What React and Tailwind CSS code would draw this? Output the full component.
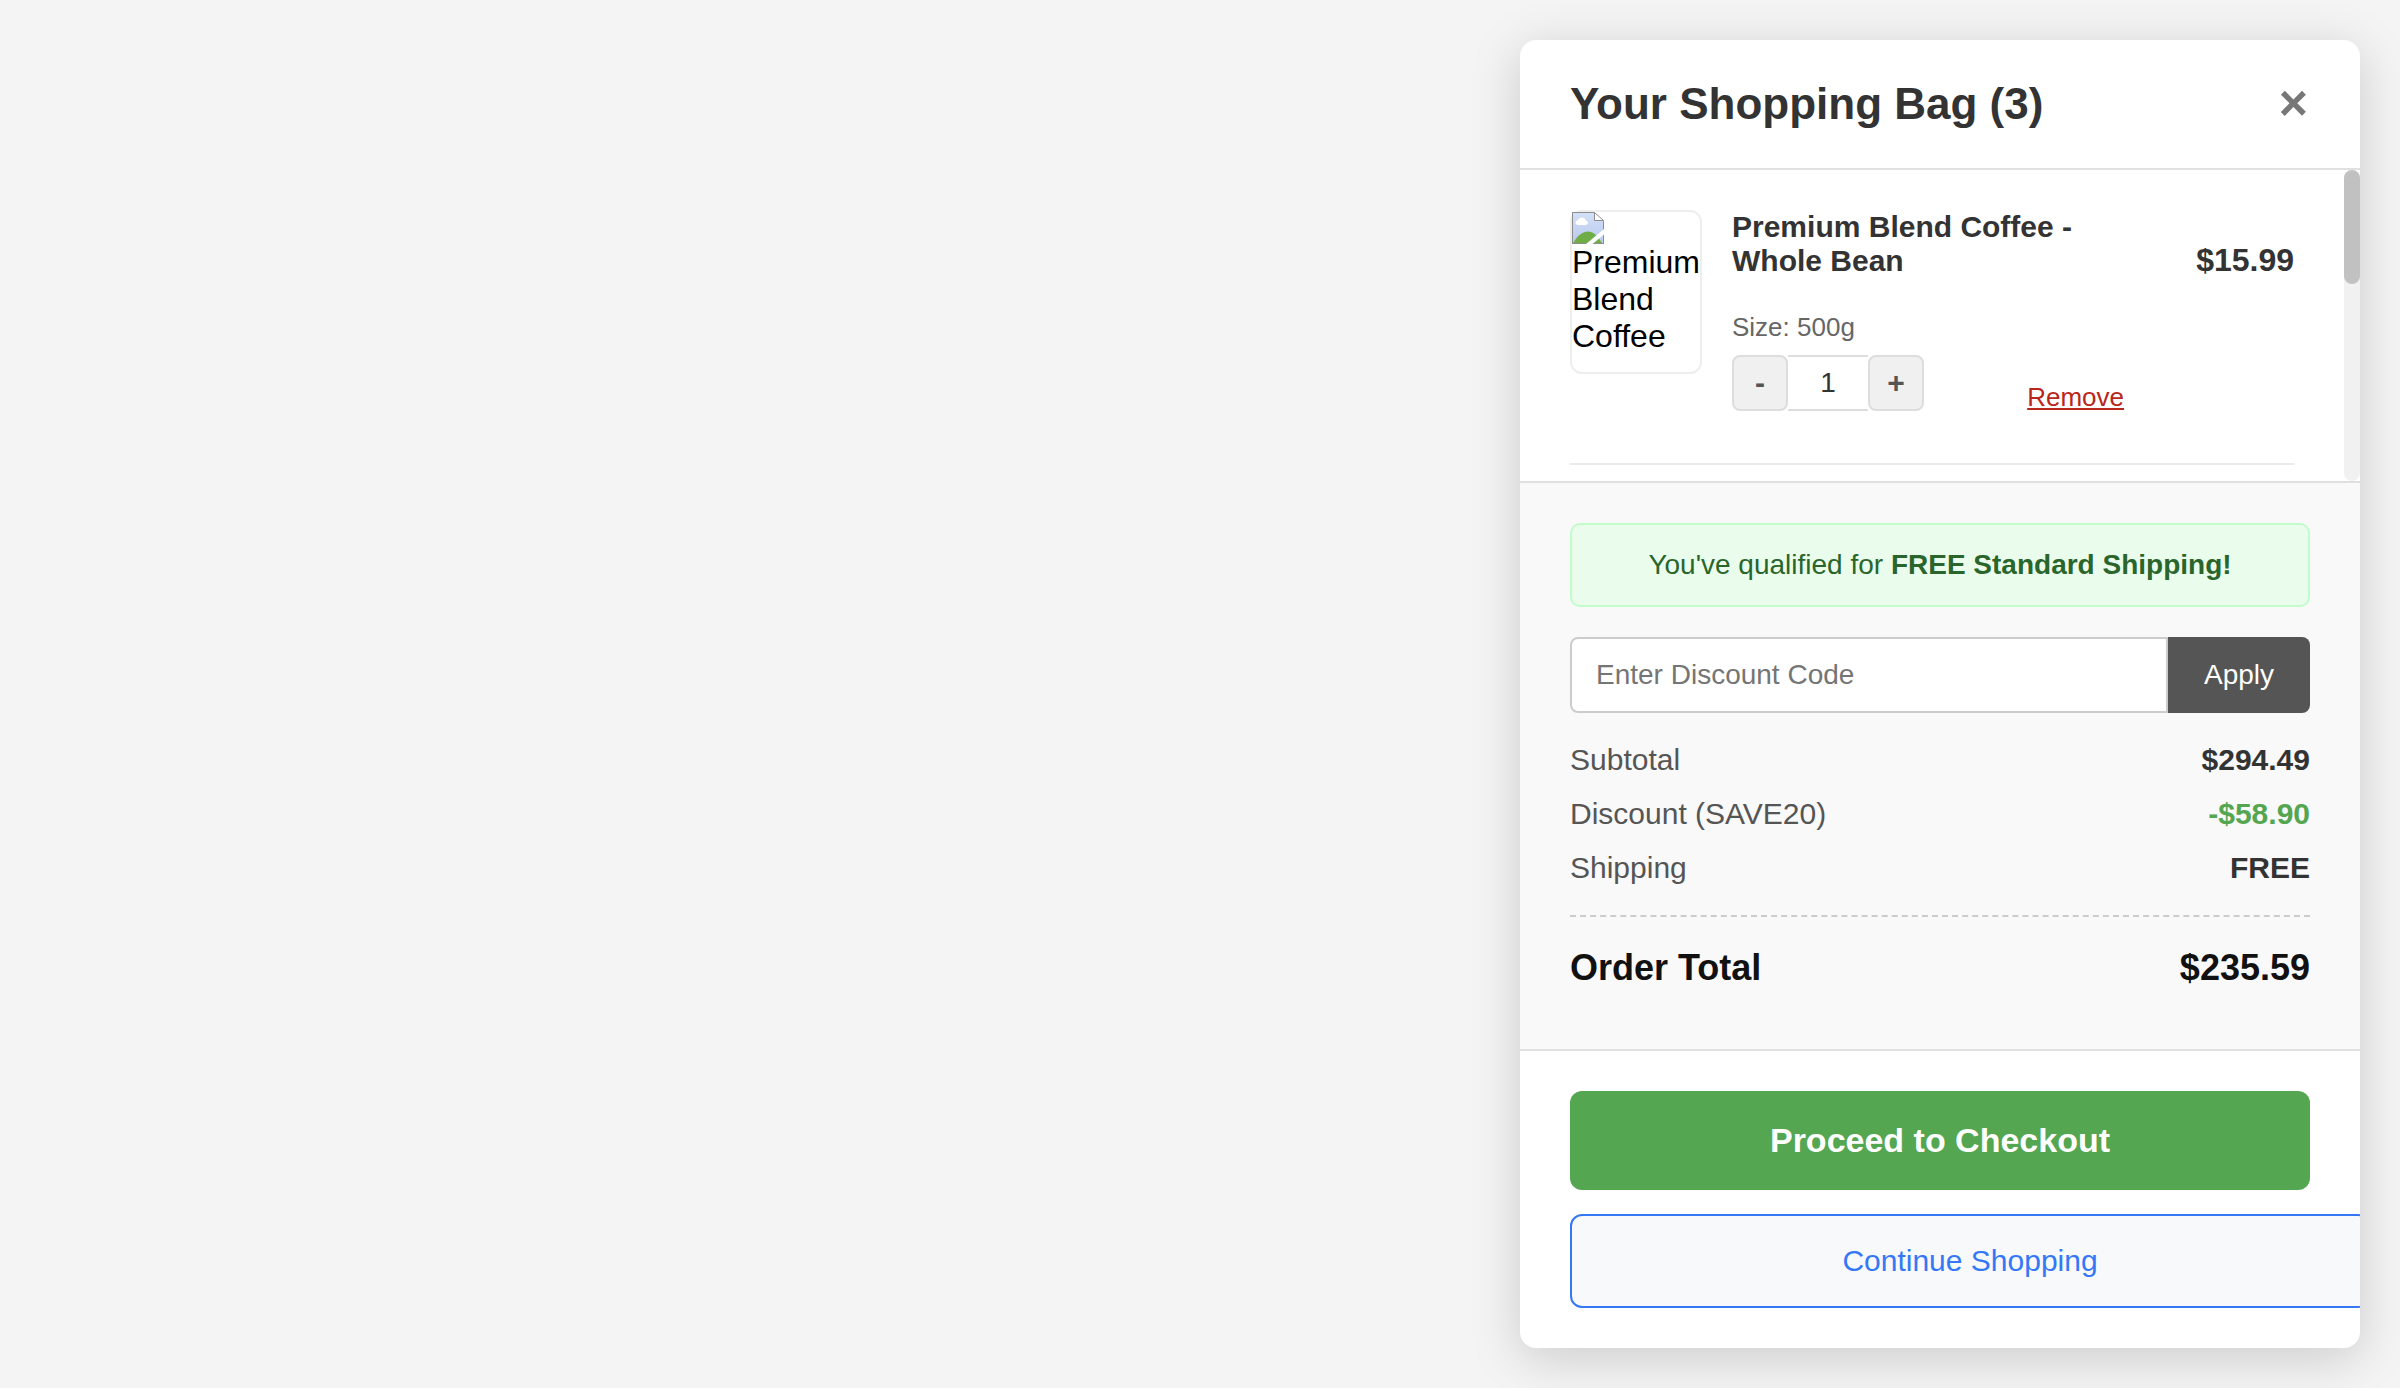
const summary = [
  { label: "Subtotal", value: "$294.49", tone: "text-[#333]" },
  { label: "Discount (SAVE20)", value: "-$58.90", tone: "text-[#54a651]" },
  { label: "Shipping", value: "FREE", tone: "text-[#333]" },
];

function MissingImage({ alt }) {
  return (
    <div className="h-[164px] w-[132px] shrink-0 rounded-xl border-2 border-[#eee] text-[32px] leading-[37px] text-black">
      <svg className="block size-8" viewBox="0 0 32 32">
        <defs>
          <linearGradient id="sky" x1="0" y1="0" x2="0" y2="1">
            <stop offset="0" stopColor="#d3e0f8" />
            <stop offset="1" stopColor="#b9c9ee" />
          </linearGradient>
        </defs>
        <path d="M0.5 0.5H22.5L31.5 9V31.5H0.5Z" fill="url(#sky)" />
        <path d="M1 31C6 23 11 19.5 16 19.5S25 23 30 31Z" fill="#70ad47" />
        <path d="M6.500 13C4.500 13 3.500 11.800 3.500 10.500S4.700 8.300 6 8.300C6.500 6.500 8 5.500 10 5.500S13.300 6.800 13.700 8.500C15.200 8.600 16 9.600 16 10.800S15 13 13.500 13Z" fill="#fff" />
        <path d="M0.5 32V0.5H22.5" fill="none" stroke="#8d8d8d" />
        <path d="M0 31.500H32M31.500 32V9" fill="none" stroke="#8d8d8d" />
        <path d="M22.500 0.500V8.500H31.500Z" fill="#fff" stroke="#8d8d8d" />
        <path d="M14 32L32 17V22.500L20.500 32Z" fill="#fff" />
      </svg>
      <p className="w-[128px]">{alt}</p>
    </div>
  );
}

function CartItem() {
  return (
    <div className="flex h-[255px] border-b-2 border-[#eaeaea]">
      <MissingImage alt="Premium Blend Coffee" />
      <div className="ml-[30px] w-[392px]">
        <h2 className="text-[30px] leading-[34px] font-bold text-[#333]">
          Premium Blend Coffee - Whole Bean
        </h2>
        <p className="mt-[34px] text-[26px] leading-[30px] text-[#666]">Size: 500g</p>
        <div className="mt-[13px] flex items-end justify-between">
          <div className="flex">
            <button className="size-14 rounded-lg border-2 border-[#ddd] bg-[#f0f0f0] text-[30px] leading-none font-bold text-[#555]">-</button>
            <div className="flex h-14 w-20 items-center justify-center border-y-2 border-[#ddd] text-[28px] text-[#333]">1</div>
            <button className="size-14 rounded-lg border-2 border-[#ddd] bg-[#f0f0f0] text-[30px] leading-none font-bold text-[#555]">+</button>
          </div>
          <a className="-mb-px text-[26px] leading-[30px] text-[#b9261a] underline decoration-2 underline-offset-2">Remove</a>
        </div>
      </div>
      <div className="mt-8 flex-1 text-right text-[32px] leading-[37px] font-bold text-[#333]">$15.99</div>
    </div>
  );
}

export default function App() {
  return (
    <div className="flex h-[1388px] w-[2400px] justify-end overflow-hidden bg-[#f4f4f4] p-10 font-['Liberation_Sans',Arial,sans-serif]">
      <aside className="flex h-[1308px] w-[840px] flex-col overflow-hidden rounded-2xl bg-white shadow-[0_10px_50px_rgba(0,0,0,0.17)]">
        <header className="flex h-[130px] shrink-0 items-center justify-between border-b-2 border-[#e0e0e0] pr-[52px] pl-[50px]">
          <h1 className="text-[44px] leading-[50px] font-bold text-[#333]">Your Shopping Bag (3)</h1>
          <button className="pb-[2px] text-[50px] leading-none font-bold text-[#777]">×</button>
        </header>

        <section className="flex h-[311px] shrink-0 overflow-hidden">
          <div className="flex-1 px-[50px] pt-10">
            <CartItem />
          </div>
          <div className="w-4 rounded-lg bg-[#f1f1f1]">
            <div className="h-[114px] rounded-lg bg-[#c1c1c1]" />
          </div>
        </section>

        <section className="h-[568px] shrink-0 border-t-2 border-[#e0e0e0] bg-[#f9f9f9] px-[50px] pt-10">
          <p className="flex h-[84px] items-center justify-center rounded-[10px] border-2 border-[#c3fccb] bg-[#eafdec] text-[28px] text-[#2a652c]">
            <span>
              You've qualified for <strong>FREE Standard Shipping!</strong>
            </span>
          </p>
          <div className="mt-[30px] flex h-[76px]">
            <input
              className="min-w-0 flex-1 rounded-l-lg border-2 border-[#ccc] bg-white px-6 text-[28px] placeholder:text-[#757575]"
              placeholder="Enter Discount Code"
            />
            <button className="w-[142px] rounded-r-lg bg-[#555] text-[28px] text-white">Apply</button>
          </div>
          <dl className="mt-[30px] flex flex-col gap-5 text-[30px] leading-[34px]">
            {summary.map((row) => (
              <div key={row.label} className="flex justify-between">
                <dt className="text-[#555]">{row.label}</dt>
                <dd className={`font-bold ${row.tone}`}>{row.value}</dd>
              </div>
            ))}
          </dl>
          <div className="mt-[30px] flex justify-between border-t-2 border-dashed border-[#ccc] pt-[30px] text-[36px] leading-[41px] font-bold text-[#111]">
            <span>Order Total</span>
            <span>$235.59</span>
          </div>
        </section>

        <footer className="flex-1 border-t-2 border-[#e0e0e0] px-[50px] pt-10">
          <button className="block h-[99px] w-full rounded-xl bg-[#54a651] text-[34px] font-bold text-white">
            Proceed to Checkout
          </button>
          <button className="mt-6 block h-[94px] w-[800px] rounded-xl border-2 border-[#3478f6] bg-[#f8f9fb] pb-[2px] text-[30px] text-[#3478f6]">
            Continue Shopping
          </button>
        </footer>
      </aside>
    </div>
  );
}
